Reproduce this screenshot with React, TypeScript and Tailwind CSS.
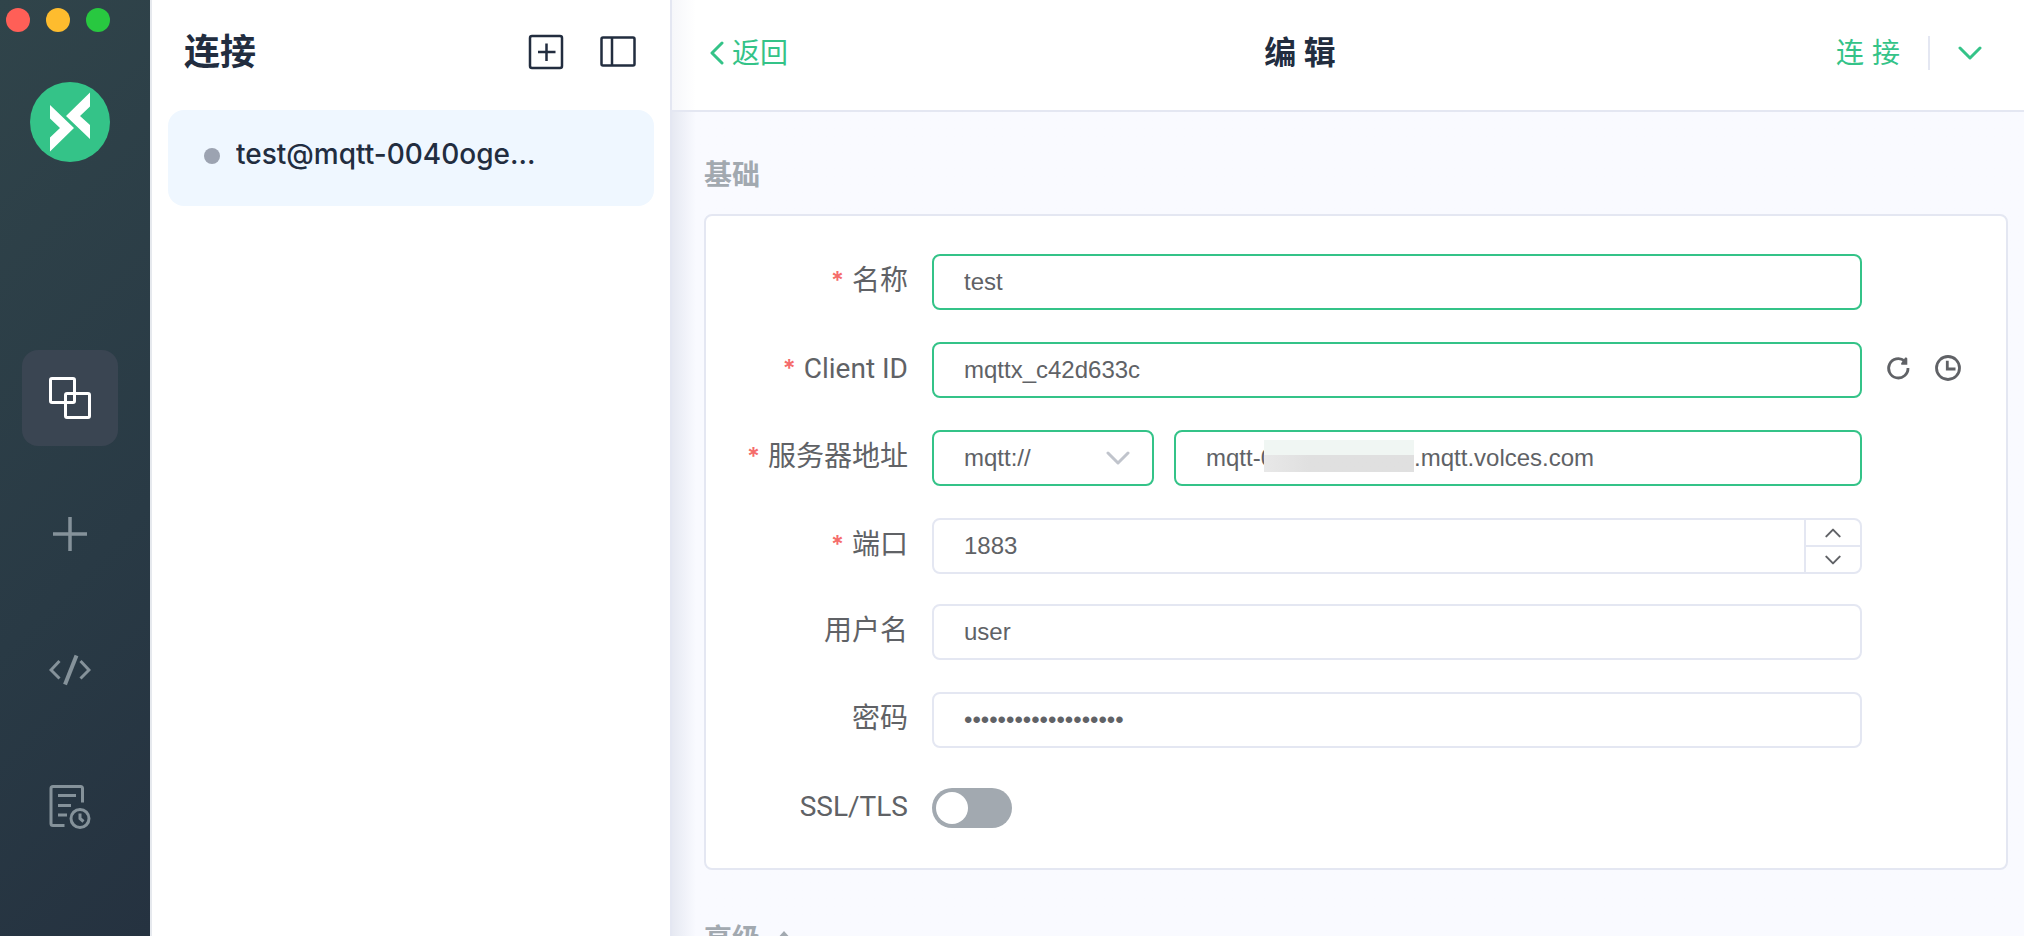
import { useState } from "react";
import type { ReactNode } from "react";

function LogoMark() {
  return (
    <svg className="size-20" viewBox="0 0 80 80" aria-hidden="true">
      <circle cx="40" cy="40" r="40" fill="#34c388" />
      <path d="M20 23L44 46L20 69.5V55.5L30 46L20 36.500Z" fill="#fff" />
      <path d="M60 10.500L36 34L60 57V43L50 34L60 24.500Z" fill="#fff" />
    </svg>
  );
}

function ConnectionsIcon() {
  return (
    <svg className="size-[42px]" viewBox="0 0 42 42" fill="none" stroke="currentColor" strokeWidth="3" aria-hidden="true">
      <rect x="1.500" y="1.500" width="24" height="24" rx="1.500" />
      <rect x="16.500" y="16.500" width="24" height="24" rx="1.500" />
    </svg>
  );
}

function PlusIcon() {
  return (
    <svg className="size-[42px]" viewBox="0 0 42 42" fill="none" stroke="currentColor" strokeWidth="3.500" aria-hidden="true">
      <path d="M4 21H38M21 4V38" />
    </svg>
  );
}

function ScriptIcon() {
  return (
    <svg className="size-[42px]" viewBox="0 0 42 42" fill="none" stroke="currentColor" strokeWidth="3" aria-hidden="true">
      <path d="M10.500 12L2 21L10.500 29.500M31.500 12L40 21L31.500 29.500" />
      <path d="M27.500 6.500L16 35.500" strokeWidth="4" />
    </svg>
  );
}

function LogIcon() {
  return (
    <svg className="size-[42px] overflow-visible" viewBox="0 0 42 42" fill="none" stroke="currentColor" strokeWidth="3" aria-hidden="true">
      <path d="M33.500 17.500V3.500Q33.500 1.500 31.500 1.500H4Q2 1.500 2 3.500V38.500Q2 40.500 4 40.500H15.500" />
      <path d="M9 10.500H27M9 20.500H22M9 30H18" />
      <circle cx="31" cy="33.500" r="9" />
      <path d="M31 28.500V33.500L34.500 36.500" />
    </svg>
  );
}

function AddBoxIcon() {
  return (
    <svg className="size-9" viewBox="0 0 36 36" fill="none" stroke="currentColor" strokeWidth="2.500" aria-hidden="true">
      <rect x="2" y="2" width="32" height="32" rx="2" />
      <path d="M10 18H27.500M18.500 9.500V27" />
    </svg>
  );
}

function PanelIcon() {
  return (
    <svg className="size-9" viewBox="0 0 36 36" fill="none" stroke="currentColor" strokeWidth="2.500" aria-hidden="true">
      <rect x="1.500" y="3.500" width="33" height="28" rx="1.500" />
      <path d="M12 4V32" />
    </svg>
  );
}

function Chevron({ className, d, width = 2 }: { className: string; d: string; width?: number }) {
  return (
    <svg className={className} viewBox="0 0 24 24" fill="none" stroke="currentColor" strokeWidth={width} strokeLinecap="round" strokeLinejoin="round" aria-hidden="true">
      <path d={d} />
    </svg>
  );
}

function RefreshIcon() {
  return (
    <svg className="size-7" viewBox="0 0 28 28" fill="none" stroke="currentColor" strokeWidth="2.800" aria-hidden="true">
      <path d="M24 14A9.700 9.700 0 1 1 20.500 6.800" />
      <path d="M21.200 3.500Q23 3 23.300 4.500V10.700H17.300Q16.600 9 18 8Z" fill="currentColor" stroke="none" />
    </svg>
  );
}

function ClockIcon() {
  return (
    <svg className="size-7" viewBox="0 0 28 28" fill="none" stroke="currentColor" strokeWidth="2.800" aria-hidden="true">
      <circle cx="14" cy="14" r="11.500" />
      <path d="M13.300 6.800V15H21.500" />
    </svg>
  );
}

function NavButton({ label, active = false, children }: { label: string; active?: boolean; children: ReactNode }) {
  return (
    <button
      type="button"
      aria-label={label}
      className={
        active
          ? "flex size-24 items-center justify-center rounded-2xl bg-[#3a4552] text-white"
          : "flex size-24 items-center justify-center rounded-2xl text-[#85929a]"
      }
    >
      {children}
    </button>
  );
}

function FormRow({
  id,
  label,
  required = false,
  extra,
  children,
}: {
  id: string;
  label: string;
  required?: boolean;
  extra?: ReactNode;
  children: ReactNode;
}) {
  return (
    <div className="flex h-14 items-center">
      <label htmlFor={id} className="flex w-[226px] shrink-0 justify-end pr-6 pb-0.5 font-[Roboto,'Noto_Sans_CJK_SC',sans-serif] text-[28px] leading-9 whitespace-nowrap">
        {required && <span className="mr-2 font-[Inter,sans-serif] text-2xl leading-9 font-semibold text-[#f56c6c]">*</span>}
        {label}
      </label>
      <div className="flex min-w-0 flex-1 items-center gap-5">{children}</div>
      <div className="flex w-36 shrink-0 items-center gap-[22px] pb-1 pl-[22px]">{extra}</div>
    </div>
  );
}

const fieldBase =
  "h-14 w-full min-w-0 rounded-lg border-2 bg-white px-[30px] font-['Liberation_Sans',Arial,sans-serif] text-2xl text-[#606266] outline-none";
const validField = fieldBase + " border-[#34c388]";
const plainField = fieldBase + " border-[#e4e7f2]";

export default function App() {
  const [name, setName] = useState("test");
  const [clientId, setClientId] = useState("mqttx_c42d633c");
  const [host, setHost] = useState("mqtt-0" + " ".repeat(21) + ".mqtt.volces.com");
  const [port, setPort] = useState(1883);
  const [user, setUser] = useState("user");
  const [password, setPassword] = useState("*".repeat(19));
  const [ssl, setSsl] = useState(false);

  return (
    <div className="flex h-screen overflow-hidden bg-white font-[Inter,'Noto_Sans_CJK_SC',sans-serif] text-[#606266]">
      <nav className="flex w-[152px] shrink-0 flex-col border-r-2 border-[#e6e9ee] bg-linear-135 from-[#30444a] via-[#293a45] via-60% to-[#253240]">
        <div className="flex gap-4 pt-2 pl-1.5">
          <button type="button" aria-label="关闭" className="size-6 rounded-full bg-[#ff5f57]" />
          <button type="button" aria-label="最小化" className="size-6 rounded-full bg-[#febc2e]" />
          <button type="button" aria-label="最大化" className="size-6 rounded-full bg-[#28c840]" />
        </div>
        <div className="mr-2.5 flex flex-col items-center pt-[50px]">
          <LogoMark />
          <div className="mt-[188px] flex flex-col gap-10">
            <NavButton label="连接" active><ConnectionsIcon /></NavButton>
            <NavButton label="新建"><PlusIcon /></NavButton>
            <NavButton label="脚本"><ScriptIcon /></NavButton>
            <NavButton label="日志"><LogIcon /></NavButton>
          </div>
        </div>
      </nav>

      <aside className="w-[520px] shrink-0 border-r-2 border-[#e4e7f2]">
        <header className="flex h-[110px] items-center justify-between pr-[34px] pb-1.5 pl-8 text-[#222d3f]">
          <h1 className="text-4xl font-bold">连接</h1>
          <div className="flex gap-9">
            <button type="button" aria-label="新建连接"><AddBoxIcon /></button>
            <button type="button" aria-label="折叠"><PanelIcon /></button>
          </div>
        </header>
        <a href="#connection" className="mx-4 flex h-24 items-center rounded-2xl bg-[#eff7ff] pb-1 pl-9 text-[#222d3f]">
          <span className="mr-4 size-4 shrink-0 rounded-full bg-[#9ca3b1]" />
          <span className="truncate pb-1 text-[28px] font-medium">test@mqtt-0040oge...</span>
        </a>
      </aside>

      <main className="flex min-w-0 flex-1 flex-col bg-linear-to-r from-[#e6e9f2] to-[#f9faff] to-[24px]">
        <header className="flex h-28 shrink-0 items-center justify-between border-b-2 border-[#e4e7f2] bg-linear-to-r from-[#f6f7fa] to-white to-[24px] pr-[42px] pb-1 pl-9 text-[28px] text-[#34c388]">
          <a href="#back" className="flex items-center">
            <Chevron className="size-6" d="M14 2L4 12L14 22" width={3} />
            返回
          </a>
          <h2 className="text-[32px] font-bold text-[#222d3f]">编 辑</h2>
          <div className="flex items-center">
            <button type="button" className="pl-6">连 接</button>
            <span className="mx-7 h-[34px] w-0.5 bg-[#e4e7f2]" />
            <button type="button" aria-label="更多"><Chevron className="size-6" d="M2 7L12 17L22 7" width={3} /></button>
          </div>
        </header>

        <div className="flex-1 overflow-hidden pr-4 pl-8">
          <h3 className="pt-10 pb-4 text-[28px] leading-[46px] font-bold text-[#a2a9b0]">基础</h3>
          <form className="rounded-lg border-2 border-[#e4e7f2] bg-white pt-[38px] pb-8" onSubmit={(e) => e.preventDefault()}>
            <div className="flex flex-col gap-8">
              <FormRow id="name" label="名称" required>
                <input id="name" className={validField} value={name} onChange={(e) => setName(e.target.value)} />
              </FormRow>
              <FormRow
                id="client"
                label="Client ID"
                required
                extra={
                  <>
                    <button type="button" aria-label="刷新"><RefreshIcon /></button>
                    <button type="button" aria-label="时间"><ClockIcon /></button>
                  </>
                }
              >
                <input id="client" className={validField} value={clientId} onChange={(e) => setClientId(e.target.value)} />
              </FormRow>
              <FormRow id="host" label="服务器地址" required>
                <div className="relative w-[222px] shrink-0">
                  <select aria-label="协议" className={validField + " appearance-none"} defaultValue="mqtt://">
                    <option>mqtt://</option>
                  </select>
                  <Chevron className="pointer-events-none absolute top-4 right-6 size-6 text-[#c0c4cc]" d="M2 7L12 17L22 7" width={3} />
                </div>
                <div className="relative min-w-0 flex-1">
                  <input id="host" className={validField} value={host} onChange={(e) => setHost(e.target.value)} />
                  <span className="absolute top-2.5 left-[90px] flex h-8 w-[150px] flex-col bg-[#f0f6f3]">
                    <span className="mt-[15px] flex-1 bg-linear-to-r from-[#e8e8e8] via-[#e0e0e0] via-30% to-[#e0e0e0]" />
                  </span>
                </div>
              </FormRow>
              <FormRow id="port" label="端口" required>
                <div className="relative w-full">
                  <input id="port" inputMode="numeric" className={plainField} value={port} onChange={(e) => setPort(Number(e.target.value) || 0)} />
                  <div className="absolute inset-y-0.5 right-0.5 flex w-14 flex-col border-l-2 border-[#e4e7f2]">
                    <button type="button" aria-label="增加" className="flex flex-1 items-center justify-center border-b-2 border-[#e4e7f2]" onClick={() => setPort(port + 1)}>
                      <Chevron className="size-4" d="M2 17L12 7L22 17" width={3} />
                    </button>
                    <button type="button" aria-label="减少" className="flex flex-1 items-center justify-center" onClick={() => setPort(port - 1)}>
                      <Chevron className="size-4" d="M2 7L12 17L22 7" width={3} />
                    </button>
                  </div>
                </div>
              </FormRow>
            </div>
            <div className="flex flex-col gap-8 pt-[30px]">
              <FormRow id="user" label="用户名">
                <input id="user" className={plainField} value={user} onChange={(e) => setUser(e.target.value)} />
              </FormRow>
              <FormRow id="password" label="密码">
                <input id="password" type="password" className={plainField} value={password} onChange={(e) => setPassword(e.target.value)} />
              </FormRow>
              <FormRow id="ssl" label="SSL/TLS">
                <span className="relative inline-flex h-10 w-20">
                  <input
                    id="ssl"
                    type="checkbox"
                    role="switch"
                    checked={ssl}
                    onChange={(e) => setSsl(e.target.checked)}
                    className="peer h-10 w-20 appearance-none rounded-full bg-[#a2a9b0] checked:bg-[#34c388]"
                  />
                  <span className="pointer-events-none absolute top-1 left-1 size-8 rounded-full bg-white peer-checked:left-11" />
                </span>
              </FormRow>
            </div>
          </form>
          <h3 className="flex items-center pt-[46px] text-[28px] leading-[46px] font-bold text-[#a2a9b0]">
            高级
            <svg className="ml-4 size-4" viewBox="0 0 16 16" fill="currentColor" aria-hidden="true"><path d="M8 0L16 9H0Z" /></svg>
          </h3>
        </div>
      </main>
    </div>
  );
}
